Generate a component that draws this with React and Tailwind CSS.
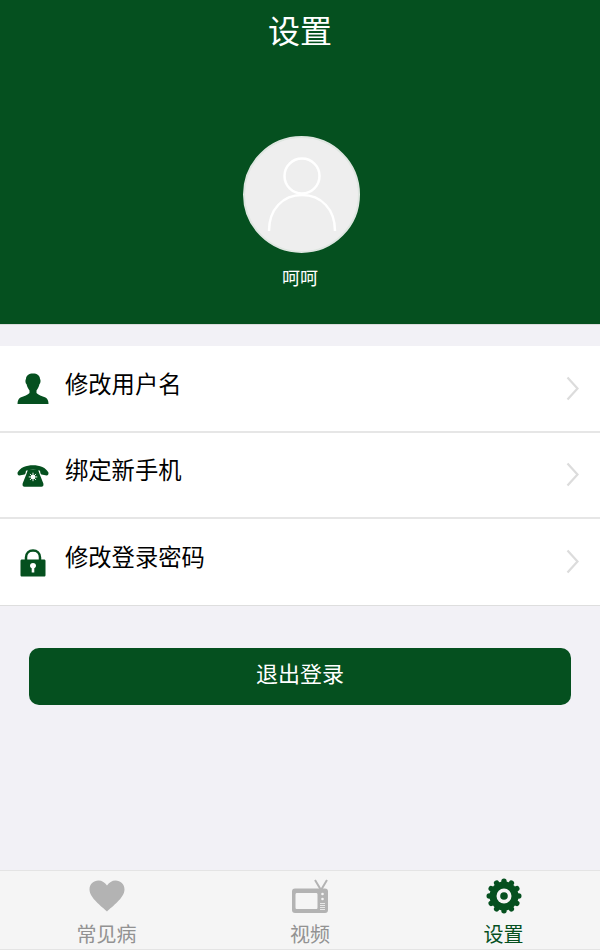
import React from 'react';

const font = { fontFamily: '"Noto Sans CJK SC", sans-serif' };

const UserIcon = () => (
  <svg width="32" height="32" viewBox="0 0 32 32" fill="#05501f">
    <path d="M9 6 C9 2.500 12 0.500 16 0.500 C20 0.500 23 2.500 23 6 C24 7 23.500 10.500 22.500 11 C22 14 20.500 16 19.500 17.500 L19.500 20 C21 22 25 23 28.500 24.500 C30.500 25.500 31.500 28 31.500 31 L0.500 31 C0.500 28 1.500 25.500 3.500 24.500 C7 23 11 22 12.500 20 L12.500 17.500 C11.500 16 10 14 9.500 11 C8.500 10.500 8 7 9 6 Z" />
  </svg>
);

const PhoneIcon = () => (
  <svg width="34" height="24" viewBox="0 0 34 24">
    <path fill="#05501f" d="M0.500 8.500 C3 3 10 0.500 17 0.500 C24 0.500 31 3 33.500 8.500 C33.500 10 33 11.500 31.500 11.500 L26 10.500 C25 10 24.500 8 24.500 6.500 C20 5 14 5 9.500 6.500 C9.500 8 9 10 8 10.500 L2.500 11.500 C1 11.500 0.500 10 0.500 8.500 Z" />
    <path fill="#05501f" d="M11.500 5.500 L22.500 5.500 L24 10 L28 20 C28.500 22.500 27.500 23.500 26 23.500 L8 23.500 C6.500 23.500 5.500 22.500 6 20 L10 10 Z" />
    <circle cx="17" cy="13" r="2.300" fill="#fff" />
    <path stroke="#fff" strokeWidth="1" d="M17 8.500 L17 17.500 M12.500 13 L21.500 13 M13.800 9.800 L20.200 16.200 M20.200 9.800 L13.800 16.200" />
  </svg>
);

const LockIcon = () => (
  <svg width="26" height="28" viewBox="0 0 26 28">
    <path fill="none" stroke="#05501f" strokeWidth="2.500" d="M6 12 L6 8.500 C6 4 9 1.500 13 1.500 C17 1.500 20 4 20 8.500 L20 12" />
    <path fill="#05501f" fillRule="evenodd" d="M2 10.500 L24 10.500 C25 10.500 25.500 11 25.500 12 L25.500 26 C25.500 27 25 27.500 24 27.500 L2 27.500 C1 27.500 0.500 27 0.500 26 L0.500 12 C0.500 11 1 10.500 2 10.500 Z M13 14 C11 14 10 15.300 10 16.800 C10 18 10.700 18.800 11.700 19.300 L11.700 23.500 L14.300 23.500 L14.300 19.300 C15.300 18.800 16 18 16 16.800 C16 15.300 15 14 13 14 Z" />
  </svg>
);

const Chevron = () => (
  <svg width="13" height="25" viewBox="0 0 13 25" fill="none" stroke="#dcdcdc" strokeWidth="2.200">
    <path d="M1.500 1.500 L11.500 12.500 L1.500 23.500" />
  </svg>
);

const HeartIcon = () => (
  <svg width="36" height="32" viewBox="0 0 36 32" fill="#b3b3b3">
    <path d="M18 31.500 C13 26.500 0.500 18 0.500 9.500 C0.500 4 4.500 0.500 9.500 0.500 C13 0.500 16 2.500 18 5.500 C20 2.500 23 0.500 26.500 0.500 C31.500 0.500 35.500 4 35.500 9.500 C35.500 18 23 26.500 18 31.500 Z" />
  </svg>
);

const TvIcon = () => (
  <svg width="36" height="35" viewBox="0 0 36 35">
    <path fill="none" stroke="#b3b3b3" strokeWidth="2" d="M23 1 L29 11 L35 1" />
    <path fill="#b3b3b3" fillRule="evenodd" d="M3 9.500 L33 9.500 C35 9.500 36 10.500 36 12.500 L36 31 C36 33 35 34 33 34 L3 34 C1 34 0 33 0 31 L0 12.500 C0 10.500 1 9.500 3 9.500 Z M5 14 C4 14 3.500 14.500 3.500 15.500 L3.500 28.500 C3.500 29.500 4 30 5 30 L24 30 C25 30 25.500 29.500 25.500 28.500 L25.500 15.500 C25.500 14.500 25 14 24 14 Z" />
    <circle cx="30.500" cy="15" r="1.300" fill="#f5f5f5" />
    <circle cx="30.500" cy="20" r="1.300" fill="#f5f5f5" />
    <path stroke="#f5f5f5" strokeWidth="0.800" d="M28 24.500 L33 24.500 M28 26.500 L33 26.500 M28 28.500 L33 28.500 M28 30.500 L33 30.500" />
  </svg>
);

const GearIcon = () => {
  const teeth = [0, 30, 60, 90, 120, 150, 180, 210, 240, 270, 300, 330];
  return (
    <svg width="36" height="36" viewBox="0 0 36 36">
      {teeth.map((a) => (
        <circle key={a} cx="18" cy="3.200" r="2.700" fill="#05501f" transform={`rotate(${a} 18 18)`} />
      ))}
      <circle cx="18" cy="18" r="14.500" fill="#05501f" />
      <circle cx="18" cy="18" r="7.500" fill="#f5f5f5" />
      <circle cx="18" cy="18" r="3.800" fill="#05501f" />
    </svg>
  );
};

const Avatar = () => (
  <div className="w-[117px] h-[117px] rounded-full bg-[#eeeeee] border-2 border-[#dfe6e1] flex items-center justify-center">
    <svg width="70" height="76" viewBox="0 0 70 76" fill="none" stroke="#fff" strokeWidth="2.500">
      <circle cx="35" cy="19" r="17.500" />
      <path d="M2 74 C2 52 16 38 35 38 C54 38 68 52 68 74" />
    </svg>
  </div>
);

const rows = [
  { label: '修改用户名', icon: <UserIcon /> },
  { label: '绑定新手机', icon: <PhoneIcon /> },
  { label: '修改登录密码', icon: <LockIcon /> },
];

const tabs = [
  { label: '常见病', icon: <HeartIcon /> },
  { label: '视频', icon: <TvIcon /> },
  { label: '设置', icon: <GearIcon />, active: true },
];

export default function App() {
  return (
    <div style={font} className="w-[600px] h-[950px] flex flex-col bg-[#f2f1f6]">
      <header className="h-[325px] bg-[#05501f] border-b border-[#dcdcdc] flex flex-col items-center">
        <h1 className="text-[32px] leading-[40px] mt-[9px] text-white">设置</h1>
        <div className="mt-[87px] ml-[3px]">
          <Avatar />
        </div>
        <p className="mt-[11px] text-lg leading-[26px] text-white">呵呵</p>
      </header>

      <ul className="mt-[21px] bg-white border-b border-[#dedede]">
        {rows.map((row, i) => (
          <li
            key={row.label}
            className={`flex items-center pl-[17px] pr-[21px] ${i < 2 ? 'h-[86.500px] border-b-2 border-[#e6e6e6]' : 'h-[85.500px]'}`}
          >
            <span className="w-8 flex justify-center translate-y-[1px]">{row.icon}</span>
            <span className="ml-4 text-[23.300px] text-black -translate-y-[5px]">{row.label}</span>
            <span className="ml-auto">
              <Chevron />
            </span>
          </li>
        ))}
      </ul>

      <div className="px-[29px] mt-[42px]">
        <button className="w-full h-[57px] pb-[8px] rounded-[10px] bg-[#05501f] text-white text-[22px]">退出登录</button>
      </div>

      <nav className="mt-auto h-[80px] bg-[#f5f5f5] border-t border-b border-[#e4e4e4] grid grid-cols-[213px_194px_193px]">
        {tabs.map((tab) => (
          <div key={tab.label} className="flex flex-col items-center">
            <div className="h-[44px] mt-[3px] flex items-center justify-center">{tab.icon}</div>
            <span className={`mt-[3px] text-xl leading-[26px] ${tab.active ? 'text-[#05501f]' : 'text-[#929292]'}`}>{tab.label}</span>
          </div>
        ))}
      </nav>
    </div>
  );
}
